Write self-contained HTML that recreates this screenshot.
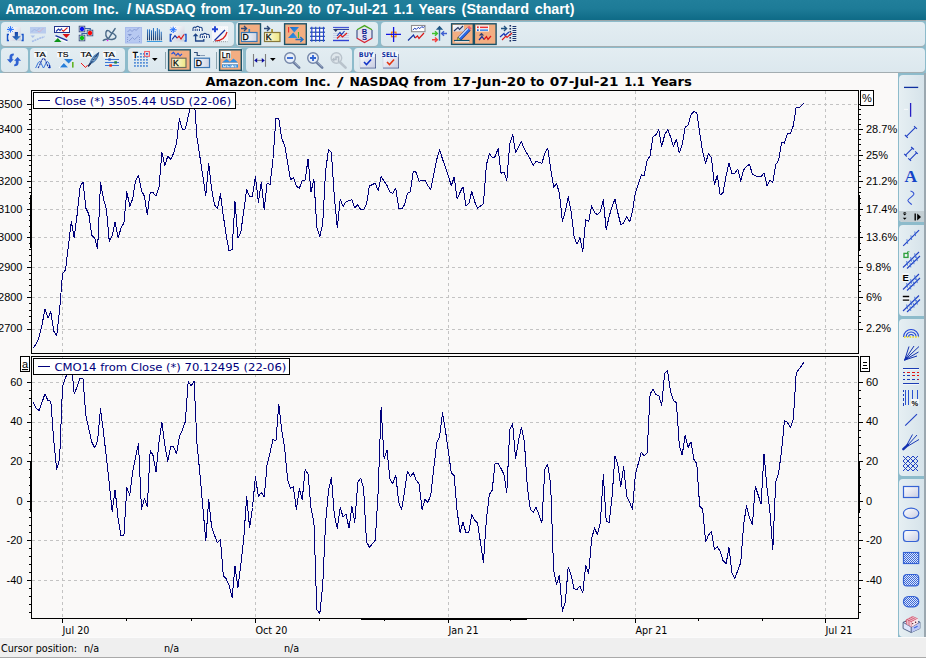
<!DOCTYPE html>
<html><head><meta charset="utf-8"><title>Chart</title>
<style>
html,body{margin:0;padding:0;}
body{width:926px;height:658px;position:relative;overflow:hidden;background:#faf9f8;font-family:"DejaVu Sans","Liberation Sans",sans-serif;}
.abs{position:absolute;}
#titlebar{left:0;top:0;width:926px;height:20px;background:linear-gradient(#217f9b,#1d7b97 45%,#0e6a86);color:#fff;font:bold 14.5px "Liberation Sans",sans-serif;line-height:19px;white-space:nowrap;}
#titlebar span{position:absolute;left:5px;top:0;}
#tbbg{left:0;top:20px;width:926px;height:53px;background:#8dbbcb;border-top:1px solid #9aa6aa;box-sizing:border-box;}
.panel{position:absolute;background:linear-gradient(#e3edf2,#dce8ee);border-radius:4px;box-shadow:0 1px 0 #a3adb1;}
.vpanel{position:absolute;background:linear-gradient(90deg,#e6eff3,#d6e3ea);border-radius:4px 0 0 4px;}
.act{position:absolute;background:#f0aa7c;border:1px solid #1d566b;box-sizing:border-box;}
.sep{position:absolute;width:1px;background:#8aa3ad;}
#rightbg{left:898px;top:73px;width:28px;height:564px;background:#8dbbcb;}
#status{left:0;top:637px;width:926px;height:21px;background:#efefef;border-top:1px solid #fbfbfb;border-bottom:1px solid #a9a9a9;box-sizing:border-box;font:10.7px "DejaVu Sans Condensed","Liberation Sans",sans-serif;color:#000;}
#status span{position:absolute;top:4px;white-space:nowrap;}
svg{position:absolute;left:0;top:0;}
</style></head><body>
<div id="titlebar" class="abs"></div>
<div id="tbbg" class="abs"></div>
<div class="panel" style="left:1px;top:22px;width:233px;height:24px;"></div>
<div class="panel" style="left:236px;top:22px;width:142px;height:24px;"></div>
<div class="panel" style="left:381px;top:22px;width:544px;height:24px;"></div>
<div class="panel" style="left:1px;top:48px;width:27px;height:24px;"></div>
<div class="panel" style="left:30px;top:48px;width:95px;height:24px;"></div>
<div class="panel" style="left:128px;top:48px;width:115px;height:24px;"></div>
<div class="panel" style="left:246px;top:48px;width:106px;height:24px;"></div>
<div class="panel" style="left:354px;top:48px;width:571px;height:24px;"></div>
<div class="sep" style="left:165px;top:52px;height:17px;"></div>
<div class="sep" style="left:216px;top:52px;height:17px;"></div>
<div id="rightbg" class="abs"></div>
<div class="vpanel" style="left:899px;top:75px;width:25px;height:147px;"></div>
<div class="abs" style="left:899px;top:211px;width:25px;height:11px;background:#c3ced3;border-radius:0 0 0 4px;"></div>
<div class="vpanel" style="left:899px;top:225px;width:25px;height:91px;"></div>
<div class="vpanel" style="left:899px;top:319px;width:25px;height:157px;"></div>
<div class="vpanel" style="left:899px;top:479px;width:25px;height:158px;"></div>
<div class="abs" style="left:924px;top:73px;width:2px;height:564px;background:#9ba8b0;"></div>
<div id="status" class="abs"><span style="left:1px">Cursor position:</span><span style="left:84px">n/a</span><span style="left:164px">n/a</span><span style="left:284px">n/a</span></div>
<svg id="main" width="926" height="658" viewBox="0 0 926 658">
<g shape-rendering="crispEdges">
<line x1="32" y1="329.5" x2="858" y2="329.5" stroke="#c3c3c3" stroke-dasharray="3 3"/>
<line x1="32" y1="297.5" x2="858" y2="297.5" stroke="#c3c3c3" stroke-dasharray="3 3"/>
<line x1="32" y1="267.5" x2="858" y2="267.5" stroke="#c3c3c3" stroke-dasharray="3 3"/>
<line x1="32" y1="237.5" x2="858" y2="237.5" stroke="#c3c3c3" stroke-dasharray="3 3"/>
<line x1="32" y1="209.5" x2="858" y2="209.5" stroke="#c3c3c3" stroke-dasharray="3 3"/>
<line x1="32" y1="181.5" x2="858" y2="181.5" stroke="#c3c3c3" stroke-dasharray="3 3"/>
<line x1="32" y1="155.5" x2="858" y2="155.5" stroke="#c3c3c3" stroke-dasharray="3 3"/>
<line x1="32" y1="129.5" x2="858" y2="129.5" stroke="#c3c3c3" stroke-dasharray="3 3"/>
<line x1="32" y1="104.5" x2="858" y2="104.5" stroke="#c3c3c3" stroke-dasharray="3 3"/>
<line x1="62.5" y1="91" x2="62.5" y2="353" stroke="#c3c3c3" stroke-dasharray="3 3"/>
<line x1="62.5" y1="356" x2="62.5" y2="618" stroke="#c3c3c3" stroke-dasharray="3 3"/>
<line x1="255.5" y1="91" x2="255.5" y2="353" stroke="#c3c3c3" stroke-dasharray="3 3"/>
<line x1="255.5" y1="356" x2="255.5" y2="618" stroke="#c3c3c3" stroke-dasharray="3 3"/>
<line x1="448.5" y1="91" x2="448.5" y2="353" stroke="#c3c3c3" stroke-dasharray="3 3"/>
<line x1="448.5" y1="356" x2="448.5" y2="618" stroke="#c3c3c3" stroke-dasharray="3 3"/>
<line x1="635.5" y1="91" x2="635.5" y2="353" stroke="#c3c3c3" stroke-dasharray="3 3"/>
<line x1="635.5" y1="356" x2="635.5" y2="618" stroke="#c3c3c3" stroke-dasharray="3 3"/>
<line x1="825.5" y1="91" x2="825.5" y2="353" stroke="#c3c3c3" stroke-dasharray="3 3"/>
<line x1="825.5" y1="356" x2="825.5" y2="618" stroke="#c3c3c3" stroke-dasharray="3 3"/>
<line x1="32" y1="580.5" x2="858" y2="580.5" stroke="#c3c3c3" stroke-dasharray="3 3"/>
<line x1="32" y1="540.5" x2="858" y2="540.5" stroke="#c3c3c3" stroke-dasharray="3 3"/>
<line x1="32" y1="501.5" x2="858" y2="501.5" stroke="#c3c3c3" stroke-dasharray="3 3"/>
<line x1="32" y1="461.5" x2="858" y2="461.5" stroke="#c3c3c3" stroke-dasharray="3 3"/>
<line x1="32" y1="422.5" x2="858" y2="422.5" stroke="#c3c3c3" stroke-dasharray="3 3"/>
<line x1="32" y1="382.5" x2="858" y2="382.5" stroke="#c3c3c3" stroke-dasharray="3 3"/>
</g>
<polyline fill="none" stroke="#00007b" stroke-width="1" stroke-linejoin="round" shape-rendering="crispEdges" points="33.3,348.2 36.2,343.9 39.1,337.1 42.1,324.6 45.0,308.6 47.9,318.1 50.8,311.7 53.8,331.3 56.7,335.4 59.6,310.4 62.5,273.6 65.5,270.1 71.3,221.5 74.2,237.8 77.1,214.8 80.1,186.7 83.0,182.0 85.9,208.3 88.8,213.9 91.8,235.3 94.7,237.9 97.6,248.9 100.5,182.8 103.5,198.8 106.4,209.5 109.3,241.7 112.2,235.3 115.1,222.1 118.1,237.8 121.0,228.2 123.9,223.0 126.8,191.6 129.8,206.1 132.7,198.7 135.6,180.6 138.5,175.2 141.5,190.8 144.4,196.1 147.3,214.9 150.2,192.3 153.1,192.6 156.1,196.2 159.0,186.7 161.9,152.1 164.8,165.8 167.8,156.0 170.7,159.4 173.6,153.4 176.5,143.2 179.4,118.9 182.4,129.5 185.3,129.0 188.2,116.6 191.1,104.6 194.1,96.7 197.0,137.7 199.9,156.8 205.8,195.7 208.7,163.6 211.6,188.7 214.5,204.9 217.4,208.6 220.4,193.9 223.3,215.6 226.2,235.3 229.1,251.0 232.1,249.3 235.0,201.4 237.9,237.9 240.8,232.2 243.8,210.8 246.7,189.0 249.6,197.0 252.5,196.0 255.4,176.2 258.4,202.5 261.3,182.2 264.2,209.5 267.1,183.1 270.1,184.5 273.0,158.8 275.9,118.6 278.8,118.5 281.8,138.8 284.7,145.3 287.6,162.5 290.5,180.0 293.4,177.4 296.4,186.1 299.3,188.4 302.2,180.8 305.1,180.1 308.1,158.9 311.0,192.1 313.9,179.0 316.8,227.5 319.8,236.6 322.7,224.0 325.6,170.9 328.5,149.6 331.4,152.4 334.4,197.3 337.3,227.8 340.2,199.1 343.1,206.6 346.1,201.5 349.0,200.8 351.9,199.6 354.8,207.9 357.8,204.7 360.7,209.6 363.6,209.9 366.5,204.4 369.4,186.0 375.3,183.2 378.2,190.7 381.1,176.6 384.1,181.0 387.0,185.6 389.9,192.2 392.8,193.4 395.8,188.1 398.7,208.3 401.6,209.0 404.5,204.9 407.4,193.7 410.4,191.5 413.3,171.0 416.2,172.3 419.1,181.5 422.1,180.3 425.0,180.2 427.9,186.0 430.8,189.4 436.7,159.6 439.6,149.6 442.5,159.1 445.4,166.7 451.3,185.6 454.2,177.0 457.1,198.8 460.1,192.3 463.0,186.7 465.9,205.5 468.8,203.7 471.8,191.3 474.7,201.8 477.6,208.3 483.4,203.7 486.4,165.0 489.3,153.5 492.2,157.4 495.1,156.9 498.1,148.5 501.0,173.2 503.9,171.9 506.8,180.3 509.7,144.2 512.7,134.6 515.6,152.1 518.5,147.2 521.4,141.8 524.4,149.3 527.3,154.0 530.2,158.9 533.1,165.3 536.1,161.2 541.9,163.5 544.8,153.1 547.7,148.0 550.7,168.6 553.6,187.2 556.5,183.5 559.4,193.0 562.4,221.5 565.3,211.4 568.2,196.7 571.1,211.0 574.1,236.4 577.0,244.3 579.9,237.7 582.8,251.8 585.7,219.9 588.7,221.4 591.6,205.7 594.5,212.4 597.4,214.6 600.4,211.7 603.3,199.5 606.2,229.8 609.1,216.5 612.1,206.4 615.0,199.1 617.9,213.1 620.8,224.6 623.7,223.0 626.7,216.3 629.6,222.0 632.5,211.1 635.4,192.6 641.3,174.8 644.2,175.6 647.1,160.8 650.1,155.5 653.0,136.6 655.9,134.8 658.8,129.5 661.7,146.7 664.7,134.8 667.6,129.6 670.5,136.7 673.4,146.3 676.4,139.2 679.3,153.0 682.2,144.7 685.1,127.2 688.1,125.1 691.0,114.7 693.9,111.5 696.8,112.5 699.7,132.9 702.7,152.2 705.6,163.1 708.5,153.7 711.4,157.5 714.4,184.6 717.3,175.5 720.2,195.1 723.1,192.5 726.1,175.8 729.0,163.1 731.9,173.3 734.8,173.4 737.7,169.2 740.7,181.1 743.6,169.9 746.5,166.1 749.4,164.5 752.4,173.9 755.3,175.8 761.1,176.9 764.0,172.8 767.0,185.5 769.9,180.3 772.8,182.5 775.7,164.8 778.7,160.3 781.6,142.4 784.5,143.1 787.4,133.6 790.4,133.8 793.3,125.6 796.2,107.1 799.1,107.6 803.8,103.1"/>
<polyline fill="none" stroke="#00007b" stroke-width="1" stroke-linejoin="round" shape-rendering="crispEdges" points="33.3,402.4 36.2,408.6 39.1,410.4 42.1,402.1 45.0,393.7 47.9,400.7 50.8,401.1 53.8,441.3 56.7,469.3 59.6,459.3 62.5,386.9 65.5,377.8 71.3,362.9 74.2,393.5 77.1,387.0 80.1,378.3 83.0,378.6 85.9,415.9 88.8,428.9 91.8,442.2 94.7,447.8 97.6,441.0 100.5,408.9 103.5,432.1 106.4,457.7 109.3,484.1 112.2,511.2 115.1,489.8 118.1,518.6 121.0,535.7 123.9,535.5 126.8,487.6 129.8,495.2 132.7,471.4 135.6,457.0 138.5,443.4 141.5,509.4 144.4,498.4 147.3,506.7 150.2,450.1 153.1,455.6 156.1,471.9 159.0,441.7 161.9,422.6 164.8,445.1 167.8,461.5 170.7,446.0 173.6,447.0 176.5,453.7 179.4,436.6 182.4,430.2 185.3,421.6 188.2,381.5 191.1,386.0 194.1,381.0 197.0,444.0 199.9,473.5 205.8,540.9 208.7,499.5 211.6,527.1 214.5,535.2 217.4,542.9 220.4,539.5 223.3,575.5 226.2,578.9 229.1,585.6 232.1,597.8 235.0,566.3 237.9,587.3 240.8,565.1 243.8,537.8 246.7,496.6 249.6,527.7 252.5,507.5 255.4,476.8 258.4,496.6 261.3,492.4 264.2,496.9 267.1,464.4 270.1,452.4 273.0,439.4 275.9,441.1 278.8,404.0 281.8,430.6 284.7,448.5 287.6,479.6 290.5,488.1 293.4,487.0 296.4,509.3 299.3,488.8 302.2,500.0 305.1,469.7 308.1,473.9 311.0,508.4 313.9,521.9 316.8,609.5 319.8,613.5 322.7,585.8 325.6,522.6 328.5,490.7 331.4,477.5 334.4,515.5 337.3,528.3 340.2,507.8 343.1,516.9 346.1,514.1 349.0,528.4 351.9,506.6 354.8,522.3 357.8,482.1 360.7,478.3 363.6,488.5 366.5,541.7 369.4,547.3 375.3,540.3 378.2,490.6 381.1,407.7 384.1,458.5 387.0,450.1 389.9,479.1 392.8,483.7 395.8,475.4 398.7,502.0 401.6,510.0 404.5,491.7 407.4,471.5 410.4,476.6 413.3,472.6 416.2,480.1 419.1,484.1 422.1,509.4 425.0,499.5 427.9,502.2 430.8,495.0 436.7,442.5 439.6,436.6 442.5,412.6 445.4,430.0 451.3,472.8 454.2,475.8 457.1,510.9 460.1,532.6 463.0,521.9 465.9,532.9 468.8,532.0 471.8,514.8 474.7,520.0 477.6,523.1 483.4,562.5 486.4,519.6 489.3,494.8 492.2,490.1 495.1,463.2 498.1,463.1 501.0,468.6 503.9,474.2 506.8,493.0 509.7,429.6 512.7,423.8 515.6,458.9 518.5,440.6 521.4,427.2 524.4,442.0 527.3,486.3 530.2,509.0 533.1,512.4 536.1,507.2 541.9,522.9 544.8,469.4 547.7,464.4 550.7,485.1 553.6,570.3 556.5,584.4 559.4,575.3 562.4,611.2 565.3,602.3 568.2,567.1 571.1,575.0 574.1,588.9 577.0,589.4 579.9,586.1 582.8,592.7 585.7,565.5 588.7,573.3 591.6,538.7 594.5,528.0 597.4,534.6 600.4,522.1 603.3,474.8 606.2,520.8 609.1,522.9 612.1,496.2 615.0,455.6 617.9,465.0 620.8,486.6 623.7,466.7 626.7,496.0 629.6,502.2 632.5,509.3 635.4,474.4 641.3,452.1 644.2,456.0 647.1,453.0 650.1,394.0 653.0,389.5 655.9,394.5 658.8,395.6 661.7,405.5 664.7,373.0 667.6,371.0 670.5,391.0 673.4,400.5 676.4,402.6 679.3,445.3 682.2,455.1 685.1,435.2 688.1,447.4 691.0,441.7 693.9,459.4 696.8,463.8 699.7,506.4 702.7,509.1 705.6,542.0 708.5,535.2 711.4,531.3 714.4,549.3 717.3,546.8 720.2,551.5 723.1,560.7 726.1,563.6 729.0,547.5 731.9,572.7 734.8,578.4 737.7,570.7 740.7,562.8 743.6,525.0 746.5,505.6 749.4,517.6 752.4,524.7 755.3,486.2 761.1,503.9 764.0,453.7 767.0,488.0 769.9,511.1 772.8,549.5 775.7,481.9 778.7,472.7 781.6,450.1 784.5,420.6 787.4,422.3 790.4,427.9 793.3,418.9 796.2,372.9 799.1,369.0 803.8,362.5"/>
<g shape-rendering="crispEdges" stroke="#000" fill="none">
<path d="M31.5,353.5V90.5H858.5V353.5"/>
<line x1="31" y1="353.5" x2="859" y2="353.5" stroke-width="1"/>
<path d="M31.5,618.5V356.5H858.5V618.5"/>
<line x1="31" y1="618.5" x2="859" y2="618.5"/>
<line x1="27" y1="329.5" x2="31" y2="329.5"/><line x1="859" y1="329.5" x2="863" y2="329.5"/>
<line x1="29" y1="322.5" x2="31" y2="322.5"/><line x1="859" y1="322.5" x2="861" y2="322.5"/>
<line x1="29" y1="316.5" x2="31" y2="316.5"/><line x1="859" y1="316.5" x2="861" y2="316.5"/>
<line x1="29" y1="310.5" x2="31" y2="310.5"/><line x1="859" y1="310.5" x2="861" y2="310.5"/>
<line x1="29" y1="303.5" x2="31" y2="303.5"/><line x1="859" y1="303.5" x2="861" y2="303.5"/>
<line x1="27" y1="297.5" x2="31" y2="297.5"/><line x1="859" y1="297.5" x2="863" y2="297.5"/>
<line x1="29" y1="291.5" x2="31" y2="291.5"/><line x1="859" y1="291.5" x2="861" y2="291.5"/>
<line x1="29" y1="285.5" x2="31" y2="285.5"/><line x1="859" y1="285.5" x2="861" y2="285.5"/>
<line x1="29" y1="279.5" x2="31" y2="279.5"/><line x1="859" y1="279.5" x2="861" y2="279.5"/>
<line x1="29" y1="273.5" x2="31" y2="273.5"/><line x1="859" y1="273.5" x2="861" y2="273.5"/>
<line x1="27" y1="267.5" x2="31" y2="267.5"/><line x1="859" y1="267.5" x2="863" y2="267.5"/>
<line x1="29" y1="261.5" x2="31" y2="261.5"/><line x1="859" y1="261.5" x2="861" y2="261.5"/>
<line x1="29" y1="255.5" x2="31" y2="255.5"/><line x1="859" y1="255.5" x2="861" y2="255.5"/>
<line x1="29" y1="249.5" x2="31" y2="249.5"/><line x1="859" y1="249.5" x2="861" y2="249.5"/>
<line x1="29" y1="243.5" x2="31" y2="243.5"/><line x1="859" y1="243.5" x2="861" y2="243.5"/>
<line x1="27" y1="237.5" x2="31" y2="237.5"/><line x1="859" y1="237.5" x2="863" y2="237.5"/>
<line x1="29" y1="232.5" x2="31" y2="232.5"/><line x1="859" y1="232.5" x2="861" y2="232.5"/>
<line x1="29" y1="226.5" x2="31" y2="226.5"/><line x1="859" y1="226.5" x2="861" y2="226.5"/>
<line x1="29" y1="220.5" x2="31" y2="220.5"/><line x1="859" y1="220.5" x2="861" y2="220.5"/>
<line x1="29" y1="215.5" x2="31" y2="215.5"/><line x1="859" y1="215.5" x2="861" y2="215.5"/>
<line x1="27" y1="209.5" x2="31" y2="209.5"/><line x1="859" y1="209.5" x2="863" y2="209.5"/>
<line x1="29" y1="203.5" x2="31" y2="203.5"/><line x1="859" y1="203.5" x2="861" y2="203.5"/>
<line x1="29" y1="198.5" x2="31" y2="198.5"/><line x1="859" y1="198.5" x2="861" y2="198.5"/>
<line x1="29" y1="192.5" x2="31" y2="192.5"/><line x1="859" y1="192.5" x2="861" y2="192.5"/>
<line x1="29" y1="187.5" x2="31" y2="187.5"/><line x1="859" y1="187.5" x2="861" y2="187.5"/>
<line x1="27" y1="181.5" x2="31" y2="181.5"/><line x1="859" y1="181.5" x2="863" y2="181.5"/>
<line x1="29" y1="176.5" x2="31" y2="176.5"/><line x1="859" y1="176.5" x2="861" y2="176.5"/>
<line x1="29" y1="171.5" x2="31" y2="171.5"/><line x1="859" y1="171.5" x2="861" y2="171.5"/>
<line x1="29" y1="165.5" x2="31" y2="165.5"/><line x1="859" y1="165.5" x2="861" y2="165.5"/>
<line x1="29" y1="160.5" x2="31" y2="160.5"/><line x1="859" y1="160.5" x2="861" y2="160.5"/>
<line x1="27" y1="155.5" x2="31" y2="155.5"/><line x1="859" y1="155.5" x2="863" y2="155.5"/>
<line x1="29" y1="150.5" x2="31" y2="150.5"/><line x1="859" y1="150.5" x2="861" y2="150.5"/>
<line x1="29" y1="144.5" x2="31" y2="144.5"/><line x1="859" y1="144.5" x2="861" y2="144.5"/>
<line x1="29" y1="139.5" x2="31" y2="139.5"/><line x1="859" y1="139.5" x2="861" y2="139.5"/>
<line x1="29" y1="134.5" x2="31" y2="134.5"/><line x1="859" y1="134.5" x2="861" y2="134.5"/>
<line x1="27" y1="129.5" x2="31" y2="129.5"/><line x1="859" y1="129.5" x2="863" y2="129.5"/>
<line x1="29" y1="124.5" x2="31" y2="124.5"/><line x1="859" y1="124.5" x2="861" y2="124.5"/>
<line x1="29" y1="119.5" x2="31" y2="119.5"/><line x1="859" y1="119.5" x2="861" y2="119.5"/>
<line x1="29" y1="114.5" x2="31" y2="114.5"/><line x1="859" y1="114.5" x2="861" y2="114.5"/>
<line x1="29" y1="109.5" x2="31" y2="109.5"/><line x1="859" y1="109.5" x2="861" y2="109.5"/>
<line x1="27" y1="104.5" x2="31" y2="104.5"/><line x1="859" y1="104.5" x2="863" y2="104.5"/>
<line x1="29" y1="612.5" x2="31" y2="612.5"/><line x1="859" y1="612.5" x2="861" y2="612.5"/>
<line x1="29" y1="604.5" x2="31" y2="604.5"/><line x1="859" y1="604.5" x2="861" y2="604.5"/>
<line x1="29" y1="596.5" x2="31" y2="596.5"/><line x1="859" y1="596.5" x2="861" y2="596.5"/>
<line x1="29" y1="588.5" x2="31" y2="588.5"/><line x1="859" y1="588.5" x2="861" y2="588.5"/>
<line x1="27" y1="580.5" x2="31" y2="580.5"/><line x1="859" y1="580.5" x2="863" y2="580.5"/>
<line x1="29" y1="572.5" x2="31" y2="572.5"/><line x1="859" y1="572.5" x2="861" y2="572.5"/>
<line x1="29" y1="564.5" x2="31" y2="564.5"/><line x1="859" y1="564.5" x2="861" y2="564.5"/>
<line x1="29" y1="556.5" x2="31" y2="556.5"/><line x1="859" y1="556.5" x2="861" y2="556.5"/>
<line x1="29" y1="548.5" x2="31" y2="548.5"/><line x1="859" y1="548.5" x2="861" y2="548.5"/>
<line x1="27" y1="540.5" x2="31" y2="540.5"/><line x1="859" y1="540.5" x2="863" y2="540.5"/>
<line x1="29" y1="532.5" x2="31" y2="532.5"/><line x1="859" y1="532.5" x2="861" y2="532.5"/>
<line x1="29" y1="525.5" x2="31" y2="525.5"/><line x1="859" y1="525.5" x2="861" y2="525.5"/>
<line x1="29" y1="517.5" x2="31" y2="517.5"/><line x1="859" y1="517.5" x2="861" y2="517.5"/>
<line x1="29" y1="509.5" x2="31" y2="509.5"/><line x1="859" y1="509.5" x2="861" y2="509.5"/>
<line x1="27" y1="501.5" x2="31" y2="501.5"/><line x1="859" y1="501.5" x2="863" y2="501.5"/>
<line x1="29" y1="493.5" x2="31" y2="493.5"/><line x1="859" y1="493.5" x2="861" y2="493.5"/>
<line x1="29" y1="485.5" x2="31" y2="485.5"/><line x1="859" y1="485.5" x2="861" y2="485.5"/>
<line x1="29" y1="477.5" x2="31" y2="477.5"/><line x1="859" y1="477.5" x2="861" y2="477.5"/>
<line x1="29" y1="469.5" x2="31" y2="469.5"/><line x1="859" y1="469.5" x2="861" y2="469.5"/>
<line x1="27" y1="461.5" x2="31" y2="461.5"/><line x1="859" y1="461.5" x2="863" y2="461.5"/>
<line x1="29" y1="453.5" x2="31" y2="453.5"/><line x1="859" y1="453.5" x2="861" y2="453.5"/>
<line x1="29" y1="445.5" x2="31" y2="445.5"/><line x1="859" y1="445.5" x2="861" y2="445.5"/>
<line x1="29" y1="437.5" x2="31" y2="437.5"/><line x1="859" y1="437.5" x2="861" y2="437.5"/>
<line x1="29" y1="430.5" x2="31" y2="430.5"/><line x1="859" y1="430.5" x2="861" y2="430.5"/>
<line x1="27" y1="422.5" x2="31" y2="422.5"/><line x1="859" y1="422.5" x2="863" y2="422.5"/>
<line x1="29" y1="414.5" x2="31" y2="414.5"/><line x1="859" y1="414.5" x2="861" y2="414.5"/>
<line x1="29" y1="406.5" x2="31" y2="406.5"/><line x1="859" y1="406.5" x2="861" y2="406.5"/>
<line x1="29" y1="398.5" x2="31" y2="398.5"/><line x1="859" y1="398.5" x2="861" y2="398.5"/>
<line x1="29" y1="390.5" x2="31" y2="390.5"/><line x1="859" y1="390.5" x2="861" y2="390.5"/>
<line x1="27" y1="382.5" x2="31" y2="382.5"/><line x1="859" y1="382.5" x2="863" y2="382.5"/>
<line x1="62.5" y1="619" x2="62.5" y2="623"/>
<line x1="255.5" y1="619" x2="255.5" y2="623"/>
<line x1="448.5" y1="619" x2="448.5" y2="623"/>
<line x1="635.5" y1="619" x2="635.5" y2="623"/>
<line x1="825.5" y1="619" x2="825.5" y2="623"/>
<line x1="126.5" y1="619" x2="126.5" y2="621"/>
<line x1="191.5" y1="619" x2="191.5" y2="621"/>
<line x1="319.5" y1="619" x2="319.5" y2="621"/>
<line x1="384.5" y1="619" x2="384.5" y2="621"/>
<line x1="510.5" y1="619" x2="510.5" y2="621"/>
<line x1="573.5" y1="619" x2="573.5" y2="621"/>
<line x1="698.5" y1="619" x2="698.5" y2="621"/>
<line x1="762.5" y1="619" x2="762.5" y2="621"/>
<rect x="30" y="195" width="2" height="53" fill="#000" stroke="none"/>
<rect x="858" y="195" width="2" height="56" fill="#000" stroke="none"/>
<rect x="30" y="462" width="2" height="50" fill="#000" stroke="none"/>
<rect x="858" y="462" width="2" height="51" fill="#000" stroke="none"/>
<rect x="361" y="618" width="166" height="2" fill="#000" stroke="none"/>
<rect x="33.5" y="92.5" width="202" height="16" fill="#fff"/>
<rect x="33.5" y="358.5" width="256" height="16" fill="#fff"/>
<rect x="860.5" y="90.5" width="13" height="15" fill="#fff"/>
<rect x="860.5" y="356.5" width="9" height="15" fill="#fff"/>
<rect x="20.5" y="356.5" width="9" height="15" fill="#fff"/>
</g>
<line x1="38" y1="100.5" x2="50" y2="100.5" stroke="#00007b" shape-rendering="crispEdges"/>
<line x1="38" y1="366.5" x2="50" y2="366.5" stroke="#00007b" shape-rendering="crispEdges"/>
<path d="M863,362.5h4M863,365.5h4M862,368.5h6" stroke="#000" shape-rendering="crispEdges"/>
<text transform="translate(54.5,105) scale(1.056,1)" font-family="DejaVu Sans,Liberation Sans,sans-serif" font-size="11" fill="#00007b">Close (*) 3505.44 USD (22-06)</text>
<text transform="translate(54.5,371) scale(1.054,1)" font-family="DejaVu Sans,Liberation Sans,sans-serif" font-size="11" fill="#00007b">CMO14 from Close (*) 70.12495 (22-06)</text>
<text x="867" y="102" font-family="Liberation Sans,sans-serif" font-size="11" text-anchor="middle" fill="#000">%</text>
<text x="25" y="368" font-family="Liberation Sans,sans-serif" font-size="11" text-anchor="middle" text-decoration="underline" fill="#000">a</text>
<g font-family="DejaVu Sans,Liberation Sans,sans-serif" font-weight="bold" font-size="12.2" fill="#000"><text x="205.4" y="86" textLength="92.9" lengthAdjust="spacingAndGlyphs">Amazon.com</text><text x="304.8" y="86" textLength="25.9" lengthAdjust="spacingAndGlyphs">Inc.</text><text x="337.1" y="86" textLength="6.5" lengthAdjust="spacingAndGlyphs">/</text><text x="349.6" y="86" textLength="59.1" lengthAdjust="spacingAndGlyphs">NASDAQ</text><text x="413.4" y="86" textLength="32.9" lengthAdjust="spacingAndGlyphs">from</text><text x="452.3" y="86" textLength="73.3" lengthAdjust="spacingAndGlyphs">17-Jun-20</text><text x="530.2" y="86" textLength="14.1" lengthAdjust="spacingAndGlyphs">to</text><text x="549.7" y="86" textLength="68.7" lengthAdjust="spacingAndGlyphs">07-Jul-21</text><text x="624.3" y="86" textLength="20.5" lengthAdjust="spacingAndGlyphs">1.1</text><text x="651.3" y="86" textLength="40.5" lengthAdjust="spacingAndGlyphs">Years</text></g>
<g font-family="Liberation Sans,sans-serif" font-weight="bold" font-size="15.3" fill="#fff"><text x="5.4" y="14" textLength="82.7" lengthAdjust="spacingAndGlyphs">Amazon.com</text><text x="93.3" y="14" textLength="25.5" lengthAdjust="spacingAndGlyphs">Inc.</text><text x="127.0" y="14" textLength="4.2" lengthAdjust="spacingAndGlyphs">/</text><text x="135" y="14" textLength="60.5" lengthAdjust="spacingAndGlyphs">NASDAQ</text><text x="200.8" y="14" textLength="30.2" lengthAdjust="spacingAndGlyphs">from</text><text x="238" y="14" textLength="64.3" lengthAdjust="spacingAndGlyphs">17-Jun-20</text><text x="308.4" y="14" textLength="12.3" lengthAdjust="spacingAndGlyphs">to</text><text x="326.5" y="14" textLength="61.1" lengthAdjust="spacingAndGlyphs">07-Jul-21</text><text x="393.5" y="14" textLength="19.8" lengthAdjust="spacingAndGlyphs">1.1</text><text x="418.4" y="14" textLength="37.3" lengthAdjust="spacingAndGlyphs">Years</text><text x="461.6" y="14" textLength="67.4" lengthAdjust="spacingAndGlyphs">(Standard</text><text x="534.7" y="14" textLength="39.7" lengthAdjust="spacingAndGlyphs">chart)</text></g>
<text x="22.5" y="332.4" font-family="Liberation Sans,sans-serif" font-size="11" text-anchor="end" fill="#000">2700</text>
<text x="866" y="332.4" font-family="Liberation Sans,sans-serif" font-size="11" fill="#000">2.2%</text>
<text x="22.5" y="300.9" font-family="Liberation Sans,sans-serif" font-size="11" text-anchor="end" fill="#000">2800</text>
<text x="866" y="300.9" font-family="Liberation Sans,sans-serif" font-size="11" fill="#000">6%</text>
<text x="22.5" y="270.5" font-family="Liberation Sans,sans-serif" font-size="11" text-anchor="end" fill="#000">2900</text>
<text x="866" y="270.5" font-family="Liberation Sans,sans-serif" font-size="11" fill="#000">9.8%</text>
<text x="22.5" y="241.1" font-family="Liberation Sans,sans-serif" font-size="11" text-anchor="end" fill="#000">3000</text>
<text x="866" y="241.1" font-family="Liberation Sans,sans-serif" font-size="11" fill="#000">13.6%</text>
<text x="22.5" y="212.8" font-family="Liberation Sans,sans-serif" font-size="11" text-anchor="end" fill="#000">3100</text>
<text x="866" y="212.8" font-family="Liberation Sans,sans-serif" font-size="11" fill="#000">17.4%</text>
<text x="22.5" y="185.3" font-family="Liberation Sans,sans-serif" font-size="11" text-anchor="end" fill="#000">3200</text>
<text x="866" y="185.3" font-family="Liberation Sans,sans-serif" font-size="11" fill="#000">21.2%</text>
<text x="22.5" y="158.6" font-family="Liberation Sans,sans-serif" font-size="11" text-anchor="end" fill="#000">3300</text>
<text x="866" y="158.6" font-family="Liberation Sans,sans-serif" font-size="11" fill="#000">25%</text>
<text x="22.5" y="132.8" font-family="Liberation Sans,sans-serif" font-size="11" text-anchor="end" fill="#000">3400</text>
<text x="866" y="132.8" font-family="Liberation Sans,sans-serif" font-size="11" fill="#000">28.7%</text>
<text x="22.5" y="107.7" font-family="Liberation Sans,sans-serif" font-size="11" text-anchor="end" fill="#000">3500</text>
<text x="22.5" y="583.8" font-family="Liberation Sans,sans-serif" font-size="11" text-anchor="end" fill="#000">-40</text>
<text x="866" y="583.8" font-family="Liberation Sans,sans-serif" font-size="11" fill="#000">-40</text>
<text x="22.5" y="544.2" font-family="Liberation Sans,sans-serif" font-size="11" text-anchor="end" fill="#000">-20</text>
<text x="866" y="544.2" font-family="Liberation Sans,sans-serif" font-size="11" fill="#000">-20</text>
<text x="22.5" y="504.6" font-family="Liberation Sans,sans-serif" font-size="11" text-anchor="end" fill="#000">0</text>
<text x="866" y="504.6" font-family="Liberation Sans,sans-serif" font-size="11" fill="#000">0</text>
<text x="22.5" y="465.0" font-family="Liberation Sans,sans-serif" font-size="11" text-anchor="end" fill="#000">20</text>
<text x="866" y="465.0" font-family="Liberation Sans,sans-serif" font-size="11" fill="#000">20</text>
<text x="22.5" y="425.4" font-family="Liberation Sans,sans-serif" font-size="11" text-anchor="end" fill="#000">40</text>
<text x="866" y="425.4" font-family="Liberation Sans,sans-serif" font-size="11" fill="#000">40</text>
<text x="22.5" y="385.8" font-family="Liberation Sans,sans-serif" font-size="11" text-anchor="end" fill="#000">60</text>
<text x="866" y="385.8" font-family="Liberation Sans,sans-serif" font-size="11" fill="#000">60</text>
<text x="62.5" y="634" font-family="DejaVu Sans Condensed,Liberation Sans,sans-serif" font-size="10.7" fill="#000">Jul 20</text>
<text x="255.5" y="634" font-family="DejaVu Sans Condensed,Liberation Sans,sans-serif" font-size="10.7" fill="#000">Oct 20</text>
<text x="448.5" y="634" font-family="DejaVu Sans Condensed,Liberation Sans,sans-serif" font-size="10.7" fill="#000">Jan 21</text>
<text x="635.5" y="634" font-family="DejaVu Sans Condensed,Liberation Sans,sans-serif" font-size="10.7" fill="#000">Apr 21</text>
<text x="825.5" y="634" font-family="DejaVu Sans Condensed,Liberation Sans,sans-serif" font-size="10.7" fill="#000">Jul 21</text>
<defs>
<linearGradient id="gArrow" x1="0" y1="0" x2="1" y2="1"><stop offset="0" stop-color="#0a2c9a"/><stop offset="1" stop-color="#3c8cd0"/></linearGradient>
<linearGradient id="gWhiteGrey" x1="0" y1="0" x2="1" y2="1"><stop offset="0" stop-color="#ffffff"/><stop offset="1" stop-color="#c8cedc"/></linearGradient>
<linearGradient id="gBoxD" x1="0" y1="0" x2="1" y2="0"><stop offset="0" stop-color="#ffffff"/><stop offset="1" stop-color="#cdd3e4"/></linearGradient>
<linearGradient id="gBoxK" x1="0" y1="0" x2="1" y2="0"><stop offset="0" stop-color="#fffff4"/><stop offset="1" stop-color="#eee680"/></linearGradient>
<linearGradient id="gBars" x1="0" y1="0" x2="0" y2="1"><stop offset="0" stop-color="#2a7ad0"/><stop offset="1" stop-color="#102a58"/></linearGradient>
<linearGradient id="gTri" x1="0" y1="0" x2="1" y2="1"><stop offset="0" stop-color="#1a6ac8"/><stop offset="1" stop-color="#3a9ae8"/></linearGradient>
<linearGradient id="gShape" x1="0" y1="0" x2="1" y2="1"><stop offset="0" stop-color="#ffffff"/><stop offset="1" stop-color="#c9cde2"/></linearGradient>
<linearGradient id="gUp" x1="0" y1="0" x2="0" y2="1"><stop offset="0" stop-color="#1c4f7c"/><stop offset="1" stop-color="#3a86b8"/></linearGradient>
<pattern id="hatch" width="2" height="2" patternUnits="userSpaceOnUse"><rect width="2" height="2" fill="#dfe6fa"/><rect width="1" height="1" fill="#3a6ad8"/><rect x="1" y="1" width="1" height="1" fill="#3a6ad8"/></pattern>
</defs>
<rect x="238.8" y="23.8" width="21.700" height="20.600" fill="#f3ae82" stroke="#1b5268" stroke-width="1.400"/>
<rect x="284.6" y="23.8" width="21.700" height="20.600" fill="#f3ae82" stroke="#1b5268" stroke-width="1.400"/>
<rect x="451.6" y="23.8" width="21.700" height="20.600" fill="#f3ae82" stroke="#1b5268" stroke-width="1.400"/>
<rect x="474.4" y="23.8" width="21.700" height="20.600" fill="#f3ae82" stroke="#1b5268" stroke-width="1.400"/>
<rect x="168.6" y="49.8" width="21.700" height="20.600" fill="#f3ae82" stroke="#1b5268" stroke-width="1.400"/>
<rect x="219.6" y="49.8" width="21.700" height="20.600" fill="#f3ae82" stroke="#1b5268" stroke-width="1.400"/>
<rect x="9" y="27" width="12" height="14" fill="url(#gWhiteGrey)"/>
<g stroke="#1464ff" stroke-width="1"><path d="M10.400,26.200v6.400M7,29.400h6.800M8.200,27.200l1.200,1.200M12.600,27.200l-1.200,1.200M8.200,31.600l1.200,-1.200M12.600,31.600l-1.200,-1.200"/></g><circle cx="10.400" cy="29.400" r="1.300" fill="#2a78ff"/>
<path d="M9,34.5h-1.5v6h1.5M21.5,34.5h1.5v6h-1.5" fill="none" stroke="#1450c8" stroke-width="1.4"/>
<path d="M14.800,32h3.200v4.300h2.700l-4.300,4.200l-4.300,-4.200h2.700z" fill="url(#gArrow)"/>
<rect x="30" y="27" width="16" height="6.5" fill="#b9ccee"/>
<path d="M31.5,32l3,-3l2,2l3,-3" fill="none" stroke="#9cb2e2" stroke-width="0.8"/><path d="M37.5,31l2,1l4,-4" fill="none" stroke="#d4a8c4" stroke-width="0.8"/>
<path d="M30.5,35.5h4.5l-2.2,2.6z" fill="#a9c0ea"/>
<path d="M32,41.5l12.5,-5" stroke="#a6bdea" stroke-width="1.6" stroke-dasharray="2 0.6"/>
<rect x="54.5" y="26.5" width="15" height="6" fill="#fff" stroke="#22348e" stroke-width="1"/>
<path d="M56,31.5l2.5,-2.5l1.5,1.5l2,-2" fill="none" stroke="#1a34a8" stroke-width="1.1"/><path d="M62,30l1.5,1.2l4,-3.6" fill="none" stroke="#d81818" stroke-width="1.1"/>
<path d="M55.5,36.5l12,5" stroke="#fff" stroke-width="2.6"/><path d="M55.5,35.6l12,5" stroke="#1a34a0" stroke-width="1.5"/>
<path d="M62.5,34h7.5l-3.7,4z" fill="#d80c14"/>
<path d="M54,42h7.5l-3.7,-4z" fill="#0c9418"/>
<path d="M85,28.5h5.2v2M82,35v-1.5h5.5" fill="none" stroke="#3a64a4" stroke-width="1.2"/>
<rect x="79.2" y="26.2" width="5.600" height="5.600" fill="#fff" stroke="#3a4c7c" stroke-width="0.900"/><circle cx="82" cy="29" r="2.200" fill="#0a10f4"/>
<rect x="87.2" y="30.2" width="5.600" height="5.600" fill="#fff" stroke="#3a4c7c" stroke-width="0.900"/><circle cx="90" cy="33" r="2.200" fill="#f80808"/>
<rect x="79.2" y="35.2" width="5.600" height="5.600" fill="#fff" stroke="#3a4c7c" stroke-width="0.900"/><circle cx="82" cy="38" r="2.200" fill="#08c010"/>
<path d="M103.200,40.400C104.500,39.200 106.500,39.400 108.200,38.800C106.600,37.400 105.200,34.500 106.200,31.600C107,29.800 109.400,30.400 110.600,32.600C112,33 114.600,33.600 115.800,35.800C116.400,37.600 115.200,38.800 113,39.200C111.400,39.600 109.600,39.400 108.200,38.800" fill="none" stroke="#4a6a88" stroke-width="1.400" stroke-linecap="round"/>
<path d="M115.100,28.600L108.600,38.400" fill="none" stroke="#4a6a88" stroke-width="1.500" stroke-linecap="round"/>
<rect x="106.900" y="39.800" width="1.300" height="1.300" fill="#f418f4"/>
<rect x="125.5" y="27.500" width="16" height="15.500" fill="#b7c9f1" stroke="#a9bcec" stroke-width="1"/>
<g fill="none" stroke="#8298d2" stroke-width="0.9"><path d="M127.500,32l2.500,-2.500l2,2l2.500,-2.500l1.500,1.500l3,-3"/><path d="M129,41l3.500,-3.500l2,2l4.500,-4"/><path d="M127.500,37v5.500M139.500,37v5.500" stroke-dasharray="1 1"/></g><path d="M127.500,34h4.500l-2.200,2.300z" fill="#8096d0"/>
<rect x="147.10" y="29.3" width="1" height="11.0" fill="url(#gBars)"/>
<rect x="149.05" y="29.3" width="1" height="11.0" fill="url(#gBars)"/>
<rect x="151.00" y="30.3" width="1" height="10.0" fill="url(#gBars)"/>
<rect x="152.95" y="28" width="1" height="12.3" fill="url(#gBars)"/>
<rect x="154.90" y="31.2" width="1" height="9.1" fill="url(#gBars)"/>
<rect x="156.85" y="28" width="1" height="12.3" fill="url(#gBars)"/>
<rect x="158.80" y="29.3" width="1" height="11.0" fill="url(#gBars)"/>
<rect x="160.75" y="31.7" width="1" height="8.6" fill="url(#gBars)"/>
<rect x="146.800" y="41" width="15.500" height="1" fill="#3a9ae0"/>
<rect x="171.500" y="26" width="13" height="15.500" fill="url(#gWhiteGrey)"/>
<g stroke="#1464ff" stroke-width="1"><path d="M173.200,26.600v6.400M169.800,29.800h6.800M171,27.600l1.200,1.200M175.400,27.600l-1.200,1.200M171,32l1.200,-1.200M175.400,32l-1.200,-1.200"/></g><circle cx="173.200" cy="29.800" r="1.300" fill="#2a78ff"/>
<path d="M171.800,34.500h-1.500v6.500h1.500M184.500,34.500h1.500v6.500h-1.500" fill="none" stroke="#1450c8" stroke-width="1.4"/>
<path d="M172,39.500l3,-3.800l2.200,2.500" fill="none" stroke="#1230a0" stroke-width="1.200"/><path d="M177.200,38.200l1.800,-2l2,2.800l3,-4.500" fill="none" stroke="#e01818" stroke-width="1.200"/>
<g fill="#fff" stroke="#1f4488" stroke-width="1.100"><path d="M193,31v-2.200c0,-1.400 1.800,-2.200 2.800,-1.200c0.600,-1.600 3.200,-1.600 3.800,0c1.200,-0.800 2.600,0 2.600,1.400v2"/><path d="M195.200,31v-2.200M197.200,31v-2.200M199.400,31v-2.200" /><path d="M200.200,38v-2.200c0,-1.400 1.800,-2.200 2.800,-1.200c0.600,-1.600 3.200,-1.600 3.800,0c1.200,-0.800 2.600,0 2.600,1.400v2"/><path d="M202.400,38v-2.200M204.400,38v-2.200M206.600,38v-2.200"/></g>
<path d="M195.600,34.500v6.500h8.200v-2" fill="none" stroke="#1f4488" stroke-width="1.300"/><path d="M192.800,36.200l2.800,-3l2.800,3z" fill="#1f4488"/>
<rect x="212" y="26" width="16" height="15" fill="#f4f6fa"/>
<g fill="#fff"><rect x="221" y="27" width="0.8" height="0.8"/><rect x="221" y="29" width="0.8" height="0.8"/><rect x="221" y="31" width="0.8" height="0.8"/><rect x="223" y="27" width="0.8" height="0.8"/><rect x="223" y="29" width="0.8" height="0.8"/><rect x="223" y="31" width="0.8" height="0.8"/><rect x="225" y="27" width="0.8" height="0.8"/><rect x="225" y="29" width="0.8" height="0.8"/><rect x="225" y="31" width="0.8" height="0.8"/><rect x="227" y="27" width="0.8" height="0.8"/><rect x="227" y="29" width="0.8" height="0.8"/><rect x="227" y="31" width="0.8" height="0.8"/></g>
<path d="M215,26.200v6M212,29.200h6" stroke="#2244d4" stroke-width="2"/>
<path d="M214.500,40.500l10.500,-10.500" stroke="#1230a4" stroke-width="1.300"/>
<path d="M215,41c5.500,0 10.500,-3 12,-9" fill="none" stroke="#d81c1c" stroke-width="1.200"/>
<path d="M213,41.700h14.500" stroke="#8a8a8a" stroke-width="0.8" stroke-dasharray="1 1"/>
<path d="M241,28.500h5M244,26l2.600,2.500l-2.600,2.500" fill="none" stroke="#2f4a78" stroke-width="1.300"/>
<rect x="248.400" y="29" width="1.700" height="3.200" fill="#3a86c4"/>
<rect x="241.500" y="32.500" width="15.500" height="9" fill="url(#gBoxD)" stroke="#3a76b4" stroke-width="1.200"/>
<text x="242.600" y="40.300" font-family="Liberation Sans,sans-serif" font-size="8.600" fill="#000" stroke="#000" stroke-width="0.300">D</text>
<path d="M264,28.500h5M267,26l2.600,2.500l-2.600,2.500" fill="none" stroke="#2f4a78" stroke-width="1.300"/>
<rect x="271.200" y="29" width="1.700" height="3.200" fill="#a48c22"/>
<rect x="264.500" y="32.500" width="15.500" height="9" fill="url(#gBoxK)" stroke="#87783a" stroke-width="1.200"/>
<text x="265.800" y="40.300" font-family="Liberation Sans,sans-serif" font-size="8.600" fill="#000" stroke="#000" stroke-width="0.300">K</text>
<path d="M289.700,27h9.300l-4.700,5.600z" fill="url(#gTri)"/><path d="M288,38h9.400l-4.200,-5.600z" fill="url(#gTri)"/>
<path d="M288.600,27v5.500" stroke="#f03030" stroke-width="1.100"/><path d="M298.500,32v6" stroke="#48b828" stroke-width="1.100"/>
<path d="M295.500,39.500h7M300.300,37l2.700,2.500l-2.700,2.500" fill="none" stroke="#2472c8" stroke-width="1.400"/>
<rect x="311" y="27.500" width="13.500" height="13.500" fill="#fff"/>
<g stroke="#205094" stroke-width="1.200"><path d="M310,28.2h15"/><path d="M310,32.2h15"/><path d="M310,36.3h15"/><path d="M310,40.4h15"/></g>
<g stroke="#2846d8" stroke-width="1.200"><path d="M311.8,26.800v15"/><path d="M315.7,26.800v15"/><path d="M319.6,26.800v15"/><path d="M323.5,26.800v15"/></g>
<path d="M333,27.400h16" stroke="#3244d4" stroke-width="1"/><path d="M335,29.400h14" stroke="#203a9c" stroke-width="1.100"/>
<path d="M333,29h5.400l-2.700,3z" fill="#2a3e70"/>
<g stroke="#c3cbe8" stroke-width="0.9"><path d="M333,33.500h16M333,35.500h16M333,37.500h16"/></g>
<path d="M333,40.500h16" stroke="#3244d4" stroke-width="1.400"/>
<path d="M337,36l3,-3.500l1.500,2l3,-3.500" fill="none" stroke="#1434b4" stroke-width="1.100"/><path d="M337,38.500l3.500,-3.500l2,2l4.500,-4" fill="none" stroke="#e01818" stroke-width="1.100"/>
<path d="M364.500,25.500l7.500,4v9l-7.500,4l-7.500,-4v-9z" fill="#e4e4f0"/>
<path d="M357,30v8.500M372,30v8.500" stroke="#44548a" stroke-width="1.200"/>
<path d="M357,29.800l7.500,-4.200l7.500,4.200" fill="none" stroke="#48a820" stroke-width="1.300"/><path d="M357,38.300l7.500,4.200l7.500,-4.200" fill="none" stroke="#d82434" stroke-width="1.300"/>
<text x="364.500" y="33.600" font-family="Liberation Sans,sans-serif" font-weight="bold" font-size="7.500" text-anchor="middle" fill="#102090">B</text><text x="364.500" y="40.300" font-family="Liberation Sans,sans-serif" font-weight="bold" font-size="7.500" text-anchor="middle" fill="#102090">S</text>
<rect x="391.500" y="32.200" width="4.500" height="4.500" fill="none" stroke="#f08408" stroke-width="1.200"/>
<path d="M386,34.400h15M393.600,27v15" stroke="#1414e0" stroke-width="1.300"/>
<rect x="411.500" y="25.500" width="13.500" height="6.200" fill="#fff" stroke="#8e8e8e" stroke-width="1.100"/>
<path d="M412.800,30l2,-1.800l1.500,1.200l2,-2l1.500,1.200l2,-2l1.500,1l1.200,-1.200" fill="none" stroke="#1434b4" stroke-width="1"/>
<path d="M408,40.500l5.500,-5.500l1.500,3" fill="none" stroke="#1434a4" stroke-width="1.200"/><path d="M415,38l2.500,-2l1.500,2.500l5,-5.500" fill="none" stroke="#d81818" stroke-width="1.200"/>
<path d="M438.800,40.800v-11h-3l3.700,-4l3.700,4h-3v11z" fill="url(#gUp)"/>
<path d="M432,33.500h5M435,31.200l2.400,2.300l-2.400,2.300" fill="none" stroke="#40c030" stroke-width="1.400"/>
<path d="M432,39.700h5M435,37.400l2.400,2.300l-2.400,2.300" fill="none" stroke="#f44040" stroke-width="1.400"/>
<path d="M447,33.500h-5M444,31.200l-2.400,2.300l2.400,2.300" fill="none" stroke="#4060d0" stroke-width="1.400"/>
<rect x="453" y="25" width="11" height="6.500" fill="url(#gWhiteGrey)"/>
<path d="M454,31l4,-3.500l1.500,2l3.500,-3.500" fill="none" stroke="#203060" stroke-width="1.100"/>
<path d="M459.500,38.800l9.500,-9.800" stroke="#1c3c8c" stroke-width="4.600" stroke-linecap="butt"/><path d="M459.500,38.800l9.500,-9.800" stroke="#2a6ae8" stroke-width="3.200"/><path d="M459,37.600l9,-9.300" stroke="#e8f0ff" stroke-width="1.100"/>
<path d="M467.300,27.300l1.800,-1.600l2.600,2.600l-1.700,1.800z" fill="#f06070"/>
<path d="M457.800,37.200l2.600,2.600l-3.400,1z" fill="#d8d040" stroke="#405020" stroke-width="0.500"/>
<path d="M454,40.500h15.500" stroke="#10506c" stroke-width="1.200"/><path d="M455,41.800h14" stroke="#e8f4ff" stroke-width="1"/>
<rect x="476" y="25.300" width="13" height="6.200" fill="#f4f6fa"/>
<rect x="477" y="26.400" width="1.700" height="1.700" fill="#f02020"/><rect x="480" y="26.600" width="8" height="1.500" fill="#f03030"/>
<rect x="477" y="29.300" width="1.700" height="1.700" fill="#2060d0"/><rect x="480" y="29.400" width="8" height="1.500" fill="#3a88e8"/>
<path d="M478.800,35.600h5.400l-2.700,-2.800z" fill="#304070"/>
<path d="M479,40l3,-3.500l2,3" fill="none" stroke="#1230a0" stroke-width="1.200"/><path d="M484,39.500l2.500,-3l1.500,3l3,-3.500" fill="none" stroke="#d81818" stroke-width="1.200"/>
<path d="M501,28.500h5.500M504,26l2.600,2.500l-2.600,2.500" fill="none" stroke="#205080" stroke-width="1.300"/>
<g fill="#203060"><rect x="509.500" y="25" width="1.600" height="1.600"/><rect x="509.500" y="28" width="1.600" height="1.600"/><rect x="509.500" y="31" width="1.600" height="1.600"/><rect x="509.500" y="34" width="1.600" height="1.600"/><rect x="509.500" y="37" width="1.600" height="1.600"/><rect x="509.500" y="40" width="1.600" height="1.600"/></g>
<g stroke="#1c3470" stroke-width="1"><path d="M512.500,26.5h3.800"/><path d="M512.500,28.5h3.800"/><path d="M512.500,30.5h3.800"/><path d="M512.500,32.5h3.800"/><path d="M512.500,34.5h3.800"/><path d="M512.500,36.5h3.800"/><path d="M512.500,38.5h3.800"/><path d="M512.500,40.5h3.800"/></g>
<path d="M500,37l4,-3.500l1,2l4,-3.500" fill="none" stroke="#1434b4" stroke-width="1.100"/><path d="M502,40l4,-4l1,1.500l5,-4.500" fill="none" stroke="#e01818" stroke-width="1.100"/>
<path d="M13.800,53.600v1.900c-1.200,0 -1.500,0.600 -1.500,1.600v2.100h1.400l-3.400,3.900l-3.400,-3.900h2.600v-2.100c0,-2.400 1.500,-3.500 4.300,-3.500z" fill="#2f62d2"/>
<path d="M14.200,66.300v-1.900c1.200,0 1.600,-0.600 1.600,-1.600v-2h-1.700l3.500,-3.900l3.500,3.900h-2.500v2c0,2.400 -1.600,3.500 -4.400,3.500z" fill="#2f62d2"/>
<rect x="34" y="51" width="13" height="6.500" fill="#f6f8fa"/>
<text x="34.500" y="57" font-family="Liberation Sans,sans-serif" stroke="#000" stroke-width="0.150" font-size="7" fill="#000" textLength="11.500" lengthAdjust="spacingAndGlyphs">TA</text>
<g fill="none" stroke-width="1"><path d="M35.500,68c1.500,-2 2.500,-6.300 4,-6.300s2.500,4.300 4,6.300" stroke="#2a6ad8"/><path d="M43.500,68c1.500,-2 2.500,-6.300 4,-6.300s2,4.300 3,6.300" stroke="#2a6ad8"/><path d="M38,68c2,-2.500 3.500,-9.500 5.500,-9.500s3.500,7 5.500,9.500" stroke="#1230a8" stroke-width="1.100" stroke-dasharray="2.200 0.800"/></g>
<path d="M49.600,65v3.200" stroke="#1230a8" stroke-width="1.200"/>
<rect x="57" y="51" width="12.500" height="6.500" fill="#f6f8fa"/>
<text x="57.500" y="57" font-family="Liberation Sans,sans-serif" stroke="#000" stroke-width="0.150" font-size="7" fill="#000" textLength="11" lengthAdjust="spacingAndGlyphs">TS</text>
<path d="M64,59h9l-4.300,4.600z" fill="#2a80d8"/>
<path d="M58.500,68l5,-5.800l4.800,5.800z" fill="#fff"/><path d="M59.800,67.600l4,-4.600l4.200,4.600z" fill="#2a80d8"/>
<rect x="72" y="62" width="1.600" height="5.600" fill="#62b422"/>
<rect x="80" y="51" width="13" height="6.500" fill="#f6f8fa"/>
<text x="80.500" y="57" font-family="Liberation Sans,sans-serif" stroke="#000" stroke-width="0.150" font-size="7" fill="#000" textLength="11.500" lengthAdjust="spacingAndGlyphs">TA</text>
<path d="M99,52.200C99.600,56.500 96,62 90.600,64.200L88.400,66.300L89.400,63.200C91,58.400 94.200,54.200 99,52.200Z" fill="#4a7cb0"/><path d="M98.800,52.400L89,65.500" stroke="#223762" stroke-width="0.900"/><path d="M96.500,57.500l-3.500,1M95,60l-3.300,0.800" stroke="#a8c4e0" stroke-width="0.600"/><path d="M90.300,63.500l-2.200,2.900" stroke="#1c2c54" stroke-width="1.600"/>
<path d="M81,63l4.500,4.500l2,-2.300" fill="none" stroke="#f01818" stroke-width="1"/>
<rect x="103" y="51" width="13" height="6.500" fill="#f6f8fa"/>
<text x="103.500" y="57" font-family="Liberation Sans,sans-serif" stroke="#000" stroke-width="0.150" font-size="7" fill="#000" textLength="11.500" lengthAdjust="spacingAndGlyphs">TA</text>
<path d="M105,59.500h14M105,62.500h14M105,65.500h14" stroke="#3a76d8" stroke-width="1.100"/>
<rect x="108.300" y="58.300" width="2.400" height="2.400" fill="#2f5fd0"/><rect x="114.300" y="61.200" width="2.600" height="2.400" fill="#208044"/><rect x="109.300" y="64.300" width="2.600" height="2.400" fill="#f42c10"/>
<rect x="132.500" y="52" width="6.500" height="7" fill="#f6f8fa"/>
<rect x="134.1" y="59" width="1.700" height="1.700" fill="#4684d4"/><rect x="134.1" y="62" width="1.700" height="1.700" fill="#4684d4"/><rect x="134.1" y="65.1" width="1.700" height="1.700" fill="#4684d4"/><rect x="137.1" y="56" width="1.700" height="1.700" fill="#4684d4"/><rect x="137.1" y="59" width="1.700" height="1.700" fill="#4684d4"/><rect x="137.1" y="62" width="1.700" height="1.700" fill="#4684d4"/><rect x="137.1" y="65.1" width="1.700" height="1.700" fill="#4684d4"/><rect x="140.1" y="53" width="1.700" height="1.700" fill="#4684d4"/><rect x="140.1" y="56" width="1.700" height="1.700" fill="#4684d4"/><rect x="140.1" y="59" width="1.700" height="1.700" fill="#4684d4"/><rect x="140.1" y="62" width="1.700" height="1.700" fill="#4684d4"/><rect x="140.1" y="65.1" width="1.700" height="1.700" fill="#4684d4"/><rect x="143.1" y="53" width="1.700" height="1.700" fill="#4684d4"/><rect x="143.1" y="56" width="1.700" height="1.700" fill="#4684d4"/><rect x="143.1" y="59" width="1.700" height="1.700" fill="#4684d4"/><rect x="143.1" y="62" width="1.700" height="1.700" fill="#4684d4"/><rect x="143.1" y="65.1" width="1.700" height="1.700" fill="#4684d4"/><rect x="146.1" y="53" width="1.700" height="1.700" fill="#1846c4"/><rect x="146.1" y="56" width="1.700" height="1.700" fill="#4684d4"/><rect x="146.1" y="59" width="1.700" height="1.700" fill="#4684d4"/><rect x="146.1" y="62" width="1.700" height="1.700" fill="#4684d4"/><rect x="146.1" y="65.1" width="1.700" height="1.700" fill="#4684d4"/>
<rect x="144.600" y="51.500" width="4.800" height="4.800" fill="none" stroke="#f0606c" stroke-width="1.100"/>
<text x="132.800" y="58.300" font-family="Liberation Sans,sans-serif" font-size="8.400" fill="#000" stroke="#000" stroke-width="0.400">T</text>
<path d="M152,58h5.600l-2.800,3z" fill="#000"/>
<path d="M171.500,54l2,-1.600l2.500,3l2,-2l2,2.500l2,-2" fill="none" stroke="#2050e0" stroke-width="1.200"/><path d="M175,55.300l1.200,-1M179,55.500l1,1" stroke="#f09020" stroke-width="1"/>
<rect x="171.700" y="58.200" width="14.300" height="9.300" fill="url(#gBoxK)" stroke="#6e6e5e" stroke-width="1.200"/>
<text x="173" y="66.300" font-family="Liberation Sans,sans-serif" font-size="8.600" fill="#000" stroke="#000" stroke-width="0.300">K</text>
<path d="M194,52.500h3.200v3h3.200" fill="none" stroke="#30507c" stroke-width="1.200"/><path d="M201.500,55.500h4" stroke="#30507c" stroke-width="1.200" stroke-dasharray="1 1"/>
<rect x="194.500" y="58.200" width="15" height="9.300" fill="url(#gBoxD)" stroke="#3a76b4" stroke-width="1.200"/>
<text x="195.800" y="66.300" font-family="Liberation Sans,sans-serif" font-size="8.600" fill="#000" stroke="#000" stroke-width="0.300">D</text>
<rect x="221" y="51" width="9.700" height="7.600" fill="#f8fafc"/>
<text x="221.800" y="58" font-family="Liberation Sans,sans-serif" font-size="8.600" fill="#000" stroke="#000" stroke-width="0.250" textLength="8.600" lengthAdjust="spacingAndGlyphs">Ln</text>
<path d="M222,62.600l4.500,-3.800l3.400,3l3.600,-3.400l4.500,4.200z" fill="#3290e2"/>
<rect x="222" y="63" width="16" height="1.300" fill="#f4f8fc"/><rect x="222" y="64.400" width="16" height="3.200" fill="#3290e2"/>
<path d="M223.500,65.300v1.400h2.300v-1.400M227.300,65.300v1.400h2.300M231,65.300v1.400h1.500v-1.400v1.400h1.500v-1.400M235.800,65.300v2" fill="none" stroke="#f4f8fc" stroke-width="0.900"/>
<path d="M253.500,54v12.800M265.500,54v12.800" stroke="#7e7e7e" stroke-width="1.100"/><path d="M256,60.400h7" stroke="#7e7e7e" stroke-width="1.100"/>
<path d="M254.200,60.400l3,-2.400v4.800zM264.800,60.400l-3,-2.400v4.800z" fill="#0808a0"/>
<path d="M270,58h5.600l-2.800,3z" fill="#000"/>
<path d="M293.6,62.2l5.600,5.400" stroke="#6a7ca0" stroke-width="2.600" stroke-linecap="round"/><path d="M294.4,62.2l4.800,4.600" stroke="#b4c0d8" stroke-width="0.800"/><circle cx="290" cy="58" r="5.300" fill="#e9eff8" stroke="#7486a8" stroke-width="1.400"/><path d="M287,58h6" stroke="#2f62d2" stroke-width="1.800"/>
<path d="M316.6,62.2l5.600,5.400" stroke="#6a7ca0" stroke-width="2.600" stroke-linecap="round"/><path d="M317.4,62.2l4.800,4.600" stroke="#b4c0d8" stroke-width="0.800"/><circle cx="313" cy="58" r="5.300" fill="#e9eff8" stroke="#7486a8" stroke-width="1.400"/><path d="M310,58h6M313,55v6" stroke="#2f62d2" stroke-width="1.800"/>
<path d="M340.0,62.2l5.600,5.400" stroke="#b9c3cc" stroke-width="2.600" stroke-linecap="round"/><circle cx="336.4" cy="58" r="5.300" fill="#dfe7ec" stroke="#b9c3cc" stroke-width="1.400"/><path d="M333.0,59.6h3v-2.600h2.600v5" fill="none" stroke="#b2bcc6" stroke-width="1.500"/><path d="M331.79999999999995,59.6l2.600,-2.300v4.600z" fill="#b2bcc6"/>
<rect x="360" y="54" width="16" height="14.400" fill="#384c88"/><rect x="360" y="53" width="15" height="14.400" fill="url(#gShape)" stroke="#c8cede" stroke-width="0.600"/>
<rect x="358.5" y="51.500" width="16.1" height="5.600" fill="#f4f7fa"/>
<text x="358.8" y="56.800" font-family="DejaVu Sans,Liberation Sans,sans-serif" font-weight="bold" font-size="6.600" fill="#1230a0" textLength="14.6" lengthAdjust="spacingAndGlyphs">BUY</text>
<path d="M364,62l2.500,2.600l4.600,-5" fill="none" stroke="#1232c8" stroke-width="1.500"/>
<rect x="383" y="54" width="16" height="14.400" fill="#384c88"/><rect x="383" y="53" width="15" height="14.400" fill="url(#gShape)" stroke="#c8cede" stroke-width="0.600"/>
<rect x="381.5" y="51.500" width="16.7" height="5.600" fill="#f4f7fa"/>
<text x="381.8" y="56.800" font-family="DejaVu Sans,Liberation Sans,sans-serif" font-weight="bold" font-size="6.600" fill="#1230a0" textLength="15.2" lengthAdjust="spacingAndGlyphs">SELL</text>
<path d="M387,62l2.500,2.600l4.600,-5" fill="none" stroke="#e43410" stroke-width="1.500"/>
<path d="M904,87.400h14.200" stroke="#1030a0" stroke-width="1.300"/>
<path d="M910.600,103v13.800" stroke="#2820c4" stroke-width="1.300"/><path d="M904,109.400h4" stroke="#f8fafc" stroke-width="1"/>
<path d="M906.400,136.400L915.500,127.300M914,126.200L917,128.800M904.900,135L907.800,137.900" stroke="#2040c4" stroke-width="1.100" fill="none"/>
<path d="M905.300,155.400L912.600,148.100M911.100,147L914,149.500M904.200,153.900L906.800,156.500M909.700,159.800L916.600,152.800M915.100,151.400L917.800,153.900M908.200,158.300L911.100,160.800" stroke="#2040c4" stroke-width="1.100" fill="none"/>
<text x="910.900" y="182" font-family="Liberation Serif,serif" font-weight="bold" font-size="17.500" text-anchor="middle" fill="#1444c8">A</text>
<path d="M910.500,191c2,0.600 3.600,2 3.300,3.400c-0.500,1.800 -6.200,4.600 -5.900,6.300c0.300,1.400 2.200,2.600 3.900,3.900" stroke="#3050d4" stroke-width="1.100" fill="none"/>
<path d="M902.800,213.600h3.800l-1.900,2zM902.800,217.800h3.800l-1.900,2z" fill="#000"/><path d="M903.600,212.600h2.200" stroke="#000" stroke-width="0.800"/>
<path d="M915.200,213.500v7" stroke="#000" stroke-width="1.400"/><path d="M917.200,213.500l3.800,3.500l-3.800,3.500z" fill="#000"/>
<path d="M903.2,245.8L919.1,230.2" stroke="#2040c4" stroke-width="1.100"/><path d="M906.9,239.3l0.800,4.600" stroke="#3a6ad8" stroke-width="0.900"/><path d="M910.9,235.4l0.800,4.600" stroke="#3a6ad8" stroke-width="0.900"/><path d="M914.8,231.5l0.800,4.600" stroke="#3a6ad8" stroke-width="0.900"/>
<path d="M903,267.5L919,252" stroke="#2040c4" stroke-width="1.100"/><path d="M906.7,261.0l0.800,4.600" stroke="#3a6ad8" stroke-width="0.900"/><path d="M910.7,257.1l0.800,4.600" stroke="#3a6ad8" stroke-width="0.900"/><path d="M914.7,253.3l0.800,4.600" stroke="#3a6ad8" stroke-width="0.900"/>
<path d="M907,268.5L920,256" stroke="#2040c4" stroke-width="1.100"/><path d="M910.0,262.8l0.800,4.600" stroke="#3a6ad8" stroke-width="0.900"/><path d="M913.2,259.6l0.800,4.600" stroke="#3a6ad8" stroke-width="0.900"/><path d="M916.5,256.5l0.800,4.600" stroke="#3a6ad8" stroke-width="0.900"/>
<path d="M903,289.5L919,274" stroke="#2040c4" stroke-width="1.100"/><path d="M906.7,283.0l0.800,4.600" stroke="#3a6ad8" stroke-width="0.900"/><path d="M910.7,279.1l0.800,4.600" stroke="#3a6ad8" stroke-width="0.900"/><path d="M914.7,275.3l0.800,4.600" stroke="#3a6ad8" stroke-width="0.900"/>
<path d="M907,290.5L920,278" stroke="#2040c4" stroke-width="1.100"/><path d="M910.0,284.8l0.800,4.600" stroke="#3a6ad8" stroke-width="0.900"/><path d="M913.2,281.6l0.800,4.600" stroke="#3a6ad8" stroke-width="0.900"/><path d="M916.5,278.5l0.800,4.600" stroke="#3a6ad8" stroke-width="0.900"/>
<path d="M903,311.0L919,295.5" stroke="#2040c4" stroke-width="1.100"/><path d="M906.7,304.5l0.800,4.600" stroke="#3a6ad8" stroke-width="0.900"/><path d="M910.7,300.6l0.800,4.600" stroke="#3a6ad8" stroke-width="0.900"/><path d="M914.7,296.8l0.800,4.600" stroke="#3a6ad8" stroke-width="0.900"/>
<path d="M907,312.0L920,299.5" stroke="#2040c4" stroke-width="1.100"/><path d="M910.0,306.3l0.800,4.600" stroke="#3a6ad8" stroke-width="0.900"/><path d="M913.2,303.1l0.800,4.600" stroke="#3a6ad8" stroke-width="0.900"/><path d="M916.5,300.0l0.800,4.600" stroke="#3a6ad8" stroke-width="0.900"/>
<rect x="902.500" y="251.500" width="7" height="7" fill="#f2f6f8"/><rect x="904" y="253.400" width="4" height="4" fill="none" stroke="#2fa040" stroke-width="1.400"/><path d="M907.500,253v-1.200h2" stroke="#2fa040" stroke-width="1" fill="none"/>
<rect x="902.300" y="273" width="6.400" height="9" fill="#f2f6f8"/><text x="902.600" y="281" font-family="Liberation Sans,sans-serif" font-weight="bold" font-size="9.500" fill="#000">E</text>
<rect x="902.500" y="295.500" width="7" height="6" fill="#f6f8fa"/><path d="M902.800,296.500h6.400M902.800,300.200h6.400" stroke="#000" stroke-width="1.300"/>
<g fill="none" stroke="#2244d4" stroke-width="1.100"><path d="M903.600,337a7.500,7.500 0 0 1 15,0"/><path d="M906.100,337a5,5 0 0 1 10,0"/><path d="M908.600,337a2.500,2.500 0 0 1 5,0"/></g>
<path d="M904,337h14.500" stroke="#f0e040" stroke-width="1.800" stroke-dasharray="1.500 1.300"/>
<g stroke="#1230b0" stroke-width="1" fill="none"><path d="M904.700,360l4.300,-13.500M904.700,360l9.300,-14M904.700,360l14.300,-13.500M904.700,360l13.800,-8M904.700,360l12.300,-4"/></g><path d="M904,361l1.600,-4.500l3,2z" fill="#1230b0"/>
<g shape-rendering="crispEdges"><path d="M903,368.500h16M903,383.500h16" stroke="#1c3cb4" stroke-width="1"/><path d="M903,369.500h16M903,384.500h16" stroke="#f2f6fa" stroke-width="1"/><path d="M903,372.500h1M903,375.500h2M907,375.500h3M903,379.500h2M907,379.500h3M912,379.500h3M917,379.500h1" stroke="#1c3cb4"/><path d="M904,372.500h1M907,372.500h3M912,372.500h3M917,372.500h2M912,375.500h3M917,375.500h2M918,379.500h1" stroke="#e01414"/><path d="M903.500,390v2M903.500,394v2M903.500,398v3M903.500,403v3" stroke="#1c3cb4"/><path d="M905.500,390v15M908.500,390v15" stroke="#2a52d0"/><path d="M912.500,390v9M917.500,390v9" stroke="#2a52d0"/><rect x="911" y="399" width="8" height="7" fill="#f4f7fa"/></g>
<text x="914.800" y="405.600" font-family="Liberation Sans,sans-serif" font-weight="bold" font-size="7.500" text-anchor="middle" fill="#000">%</text>
<path d="M905.200,425.700l11.800,-11.500" stroke="#2040c4" stroke-width="1.100"/>
<g stroke="#1a3ab8" stroke-width="1" fill="none"><path d="M906,446.500l6.500,-12M907,446l10,-11M908,446l11,-6.500"/></g><path d="M903.300,449.200l4.700,-4.400" stroke="#1230b0" stroke-width="2.400" stroke-linecap="round"/>
<g stroke="#2040c4" stroke-width="1" fill="none"><path d="M903,466l5,5"/><path d="M918,466l-5,5"/><path d="M903,461l10,10"/><path d="M918,461l-10,10"/><path d="M903,456l15,15"/><path d="M918,456l-15,15"/><path d="M908,456l10,10"/><path d="M913,456l-10,10"/><path d="M913,456l5,5"/><path d="M908,456l-5,5"/></g>
<rect x="903.500" y="486.500" width="15.200" height="11" fill="url(#gShape)" stroke="#3562d4" stroke-width="1.200"/>
<ellipse cx="911.100" cy="513.300" rx="7.700" ry="5.200" fill="url(#gShape)" stroke="#3562d4" stroke-width="1.200"/>
<rect x="903.500" y="530.500" width="15.200" height="11" rx="3" fill="url(#gShape)" stroke="#3562d4" stroke-width="1.200"/>
<rect x="903.500" y="552.500" width="15.200" height="11" fill="url(#hatch)" stroke="#3562d4" stroke-width="1.200"/>
<rect x="903.500" y="574.500" width="15.200" height="11.400" rx="3.500" fill="url(#hatch)" stroke="#3562d4" stroke-width="1.200"/>
<rect x="903.500" y="596.500" width="15.200" height="10.400" rx="5" fill="url(#hatch)" stroke="#3562d4" stroke-width="1.200"/>
<path d="M903.100,622.300L911.200,618.600L919.900,622.100L919.900,628.500L911.200,632.500L903.100,628.500Z" fill="#dfe5fb" stroke="#46587e" stroke-width="0.900" stroke-linejoin="round"/>
<path d="M911.200,627L919.900,622.100L919.900,628.500L911.200,632.500Z" fill="#bcc8f5"/>
<path d="M903.100,622.300L911.200,627L919.900,622.100M911.200,627V632.500" fill="none" stroke="#46587e" stroke-width="0.900"/>
<path d="M906,619.500L912.500,616L918,618.500L918,623L911.500,627L906,624Z" fill="#d0607a"/>
<path d="M911.500,622L918,618.500L918,623L911.500,627Z" fill="#fbe6ea"/>
<path d="M907.300,620.200V624.600M909,621V625.500M910.600,621.700V626.400" stroke="#fdf0f2" stroke-width="0.800"/>
<path d="M907.600,618.700L913,621.300M909.600,617.700L915,620.300M911.600,616.700L917,619.300" stroke="#f7d3da" stroke-width="0.800"/>
<circle cx="912.700" cy="623.600" r="0.700" fill="#3a1420"/><circle cx="915.600" cy="622.300" r="0.700" fill="#3a1420"/><circle cx="905.600" cy="621.300" r="0.500" fill="#8a2030"/>
<path d="M914,628l3.600,-1.800" stroke="#3f63e0" stroke-width="1.100"/>
</svg>
</body></html>
